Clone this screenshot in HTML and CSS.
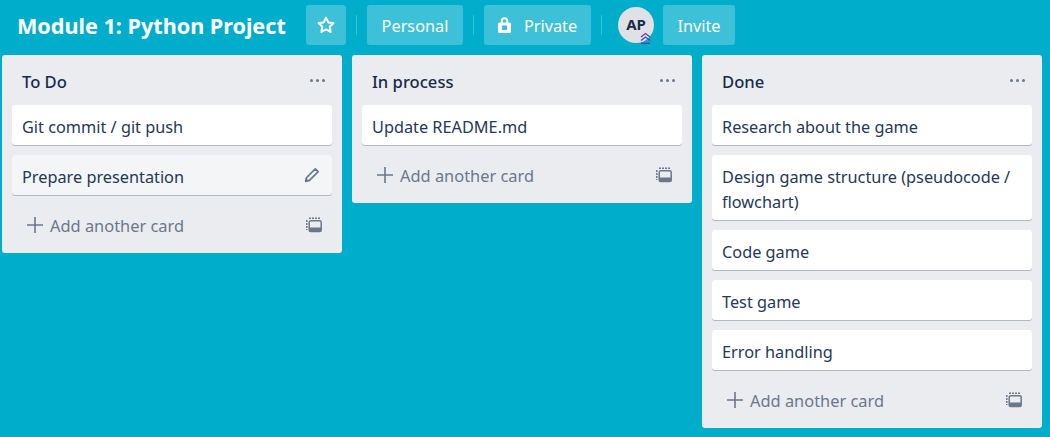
FILE: index.html
```html
<!DOCTYPE html>
<html lang="en">
<head>
  <meta charset="UTF-8" />
  <title>Module 1: Python Project</title>
  <link rel="stylesheet" href="styles.css">
</head>
<body>

  <!-- Board header -->
  <header class="board-header">
    <h1 class="board-name">Module 1: Python Project</h1>
    <a class="hdr-btn star-btn" href="#">
      <svg width="20" height="20" viewBox="0 0 20 20"><path d="M10 2.600l2.300 4.800 5.200.7-3.800 3.600.9 5.200-4.600-2.500-4.600 2.500.9-5.200-3.800-3.600 5.200-.7z" fill="none" stroke="#fff" stroke-width="2" stroke-linejoin="round"/></svg>
    </a>
    <span class="divider"></span>
    <a class="hdr-btn personal-btn" href="#"><span class="btn-label">Personal</span></a>
    <span class="divider"></span>
    <a class="hdr-btn private-btn" href="#">
      <svg width="13" height="16" viewBox="0 0 13 16"><rect x="0" y="5.500" width="13" height="10.500" rx="1.500" fill="#fff"/><path d="M3.800 6V4a2.700 2.700 0 0 1 5.400 0v2" fill="none" stroke="#fff" stroke-width="2"/><rect x="4" y="8.500" width="5" height="4.500" fill="#3dbdd8"/></svg>
      <span class="btn-label">Private</span>
    </a>
    <span class="divider"></span>
    <div class="avatar">AP
      <svg class="avatar-badge" width="11" height="12" viewBox="0 0 11 12"><path d="M1 5L5.500 1.500 10 5M1 8.500L5.500 5 10 8.500" fill="none" stroke="#5243aa" stroke-width="1.300"/><path d="M1 11.300h9" stroke="#5243aa" stroke-width="1.300"/></svg>
    </div>
    <a class="hdr-btn invite-btn" href="#"><span class="btn-label">Invite</span></a>
  </header>

  <!-- Lists -->
  <main class="board">

    <section class="list">
      <div class="list-head"><h2>To Do</h2><span class="list-menu"><i></i><i></i><i></i></span></div>
      <div class="card">Git commit / git push</div>
      <div class="card card-hover">Prepare presentation
        <svg class="edit-icon" width="16" height="16" viewBox="0 0 16 16"><path d="M11.300 1.800l2.900 2.900-8.700 8.700-3.800.9.900-3.800z" fill="none" stroke="#6b778c" stroke-width="1.700" stroke-linejoin="round"/><path d="M1.700 14.300l.6-3 2.400 2.400z" fill="#6b778c"/></svg>
      </div>
      <div class="add-row">
        <svg class="plus-icon" width="16" height="16" viewBox="0 0 16 16"><path d="M8 0v16M0 8h16" stroke="#6b778c" stroke-width="1.600"/></svg>
        <span>Add another card</span>
        <svg class="tpl-icon" width="16" height="16" viewBox="0 0 16 16"><path d="M.8 3v10M3 1.200h11" fill="none" stroke="#6b778c" stroke-width="1.500" stroke-dasharray="2 1"/><rect x="3.200" y="3.800" width="12" height="10.800" rx="1.500" fill="none" stroke="#6b778c" stroke-width="1.500"/><rect x="3.200" y="10.500" width="12" height="4.100" fill="#6b778c"/></svg>
      </div>
    </section>

    <section class="list">
      <div class="list-head"><h2>In process</h2><span class="list-menu"><i></i><i></i><i></i></span></div>
      <div class="card">Update README.md</div>
      <div class="add-row">
        <svg class="plus-icon" width="16" height="16" viewBox="0 0 16 16"><path d="M8 0v16M0 8h16" stroke="#6b778c" stroke-width="1.600"/></svg>
        <span>Add another card</span>
        <svg class="tpl-icon" width="16" height="16" viewBox="0 0 16 16"><path d="M.8 3v10M3 1.200h11" fill="none" stroke="#6b778c" stroke-width="1.500" stroke-dasharray="2 1"/><rect x="3.200" y="3.800" width="12" height="10.800" rx="1.500" fill="none" stroke="#6b778c" stroke-width="1.500"/><rect x="3.200" y="10.500" width="12" height="4.100" fill="#6b778c"/></svg>
      </div>
    </section>

    <section class="list">
      <div class="list-head"><h2>Done</h2><span class="list-menu"><i></i><i></i><i></i></span></div>
      <div class="card">Research about the game</div>
      <div class="card">Design game structure (pseudocode / flowchart)</div>
      <div class="card">Code game</div>
      <div class="card">Test game</div>
      <div class="card">Error handling</div>
      <div class="add-row">
        <svg class="plus-icon" width="16" height="16" viewBox="0 0 16 16"><path d="M8 0v16M0 8h16" stroke="#6b778c" stroke-width="1.600"/></svg>
        <span>Add another card</span>
        <svg class="tpl-icon" width="16" height="16" viewBox="0 0 16 16"><path d="M.8 3v10M3 1.200h11" fill="none" stroke="#6b778c" stroke-width="1.500" stroke-dasharray="2 1"/><rect x="3.200" y="3.800" width="12" height="10.800" rx="1.500" fill="none" stroke="#6b778c" stroke-width="1.500"/><rect x="3.200" y="10.500" width="12" height="4.100" fill="#6b778c"/></svg>
      </div>
    </section>

  </main>

</body>
</html>
```

FILE: styles.css
```css
body {
  margin: 0;
  height: 437px;
  overflow: hidden;
  background: #00aecc;
  font-family: "Noto Sans", "Open Sans", sans-serif;
  font-size: 16.3px;
  color: #253858;
}

.board-header {
  display: flex;
  align-items: center;
  height: 40px;
  padding: 5px 0 10px 17px;
}

.board-name {
  flex: none;
  width: 270px;
  margin: 0 19px 0 0;
  font-size: 21.6px;
  font-weight: 700;
  color: #fff;
  white-space: nowrap;
}

.hdr-btn {
  display: flex;
  align-items: center;
  justify-content: center;
  height: 40px;
  border-radius: 3px;
  background: rgba(255, 255, 255, 0.24);
  color: #fff;
  text-decoration: none;
}

.btn-label { margin-top: 2px; }

.star-btn { width: 40px; }
.personal-btn { width: 96px; }
.private-btn { width: 107px; gap: 13px; }
.invite-btn { width: 72px; }

.divider {
  width: 1px;
  height: 20px;
  margin: 0 10px;
  background: rgba(255, 255, 255, 0.24);
}

.avatar {
  position: relative;
  width: 36px;
  height: 36px;
  margin: 0 9px 0 6px;
  border-radius: 50%;
  background: #dfe1e6;
  color: #172b4d;
  font-size: 15px;
  font-weight: 700;
  line-height: 35px;
  text-align: center;
}

.avatar-badge {
  position: absolute;
  right: 3px;
  bottom: -1px;
}

.board {
  display: flex;
  align-items: flex-start;
  gap: 10px;
  padding-left: 2px;
}

.list {
  width: 340px;
  border-radius: 3px;
  background: #ebecf0;
}

.list-head {
  display: flex;
  justify-content: space-between;
  height: 50px;
  padding: 0 17px 0 20px;
}

.list-head h2 {
  margin: 14px 0 0;
  font-size: 16.6px;
  font-weight: 500;
  line-height: 26px;
  color: #172b4d;
}

.list-menu {
  display: flex;
  gap: 3px;
  margin-top: 24px;
}

.list-menu i {
  width: 3px;
  height: 3px;
  border-radius: 50%;
  background: #6b778c;
}

.card {
  position: relative;
  margin: 0 10px 10px;
  padding: 10px 10px 5px;
  border-radius: 3px;
  background: #fff;
  box-shadow: 0 1px 0 rgba(9, 30, 66, 0.25);
  line-height: 25px;
}

.card-hover { background: #f4f5f7; }

.edit-icon {
  position: absolute;
  top: 12px;
  right: 12px;
}

.add-row {
  display: flex;
  align-items: center;
  height: 40px;
  padding: 0 20px 8px 25px;
  font-size: 16.4px;
  color: #6b778c;
}

.plus-icon { margin-right: 7px; }
.tpl-icon { margin-left: auto; }
```
